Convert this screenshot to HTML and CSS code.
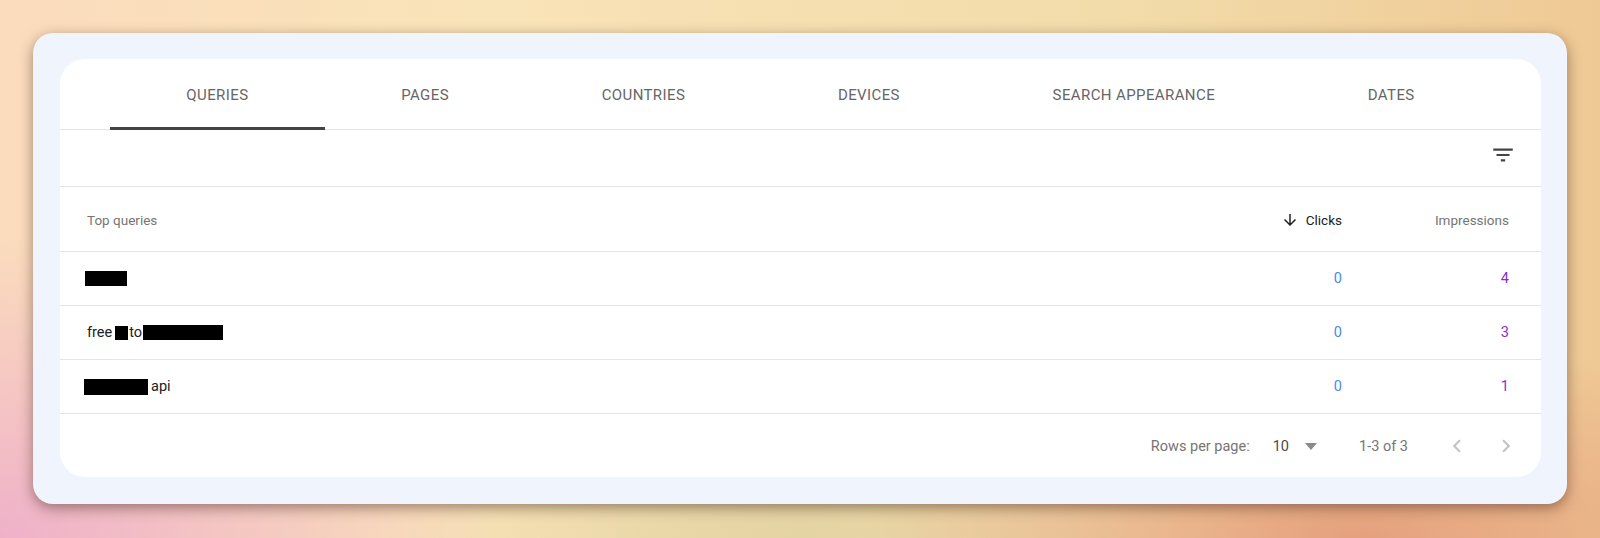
FILE: index.html
```html
<!DOCTYPE html>
<html lang="en">
<head>
    <meta charset="UTF-8">
    <title>Performance - Queries</title>
    <link rel="stylesheet" href="styles.css">
</head>
<body>
    <div class="frame">
        <div class="card">
            <div class="tabs">
                <div class="tab active">Queries</div>
                <div class="tab">Pages</div>
                <div class="tab">Countries</div>
                <div class="tab">Devices</div>
                <div class="tab">Search appearance</div>
                <div class="tab">Dates</div>
            </div>

            <div class="toolbar">
                <svg class="filter-icon" viewBox="0 0 24 24" width="26" height="26">
                    <path d="M10 18h4v-2h-4v2zM3 6v2h18V6H3zm3 7h12v-2H6v2z" fill="#444"/>
                </svg>
            </div>

            <div class="row head">
                <div class="col-query">Top queries</div>
                <div class="col-num sorted">
                    <svg viewBox="0 0 24 24" width="18" height="18">
                        <path d="M20 12l-1.41-1.41L13 16.17V4h-2v12.17l-5.58-5.59L4 12l8 8 8-8z" fill="#202124"/>
                    </svg>
                    Clicks
                </div>
                <div class="col-num">Impressions</div>
            </div>

            <div class="row">
                <div class="col-query"><span class="redact r1"></span></div>
                <div class="col-num clicks">0</div>
                <div class="col-num impr">4</div>
            </div>
            <div class="row">
                <div class="col-query">free<span class="redact r2"></span>to<span class="redact r3"></span></div>
                <div class="col-num clicks">0</div>
                <div class="col-num impr">3</div>
            </div>
            <div class="row">
                <div class="col-query"><span class="redact r4"></span>api</div>
                <div class="col-num clicks">0</div>
                <div class="col-num impr">1</div>
            </div>

            <div class="footer">
                <span class="label">Rows per page:</span>
                <span class="per-page">10</span>
                <span class="caret"></span>
                <span class="range">1-3 of 3</span>
                <svg class="chev" viewBox="0 0 24 24" width="26" height="26">
                    <path d="M15.41 7.41L14 6l-6 6 6 6 1.41-1.41L10.83 12z" fill="#c4c4c4"/>
                </svg>
                <svg class="chev" viewBox="0 0 24 24" width="26" height="26">
                    <path d="M10 6L8.59 7.41 13.17 12l-4.58 4.59L10 18l6-6z" fill="#c4c4c4"/>
                </svg>
            </div>
        </div>
    </div>
</body>
</html>
```

FILE: styles.css
```css
body {
    margin: 0;
    height: 538px;
    overflow: hidden;
    font-family: Roboto, "Liberation Sans", sans-serif;
    background:
        radial-gradient(ellipse 500px 300px at 0% 100%, #efb1c9 0%, rgba(239, 177, 201, 0) 100%),
        radial-gradient(ellipse 500px 200px at 85% 100%, #e5a07d 0%, rgba(229, 160, 125, 0) 100%),
        radial-gradient(ellipse 400px 250px at 50% 100%, #e4d3a3 0%, rgba(228, 211, 163, 0) 100%),
        linear-gradient(90deg, #fbdcbd 0%, #f9e3b8 30%, #f2dcaa 70%, #efc995 100%);
}

.frame {
    margin: 33px 0 0 33px;
    width: 1534px;
    height: 471px;
    box-sizing: border-box;
    padding: 26px 26px 27px 27px;
    background-color: #f0f5fd;
    border-radius: 20px;
    box-shadow: 0 4px 14px rgba(70, 40, 25, 0.5);
}

.card {
    background-color: #fff;
    border-radius: 25px;
    height: 418px;
    overflow: hidden;
}

.tabs {
    display: flex;
    height: 70px;
    padding: 0 50px;
    border-bottom: 1px solid #e4e4e4;
}

.tab {
    flex: 1 1 auto;
    display: flex;
    align-items: center;
    justify-content: center;
    text-transform: uppercase;
    font-size: 15px;
    letter-spacing: 0.4px;
    color: #666;
    box-sizing: border-box;
    border-bottom: 3px solid transparent;
    padding-top: 3px;
    margin-bottom: -1px;
}

.tab.active {
    border-bottom-color: #444;
}

.toolbar {
    height: 57px;
    box-sizing: border-box;
    display: flex;
    align-items: center;
    justify-content: flex-end;
    padding: 0 25px 6px 0;
    border-bottom: 1px solid #e4e4e4;
}

.row {
    display: flex;
    align-items: center;
    height: 53px;
    padding: 0 32px 0 27px;
    border-bottom: 1px solid #e4e4e4;
    font-size: 14.5px;
    color: #202124;
}

.row.head {
    box-sizing: border-box;
    height: 65px;
    padding-top: 2px;
    font-size: 13.5px;
    color: #757575;
}

.col-query {
    flex: 1;
    display: flex;
    align-items: center;
}

.col-num {
    width: 167px;
    display: flex;
    align-items: center;
    justify-content: flex-end;
}

.col-num.sorted {
    color: #202124;
}

.col-num.sorted svg {
    margin-right: 7px;
}

.clicks {
    color: #4a8ae6;
}

.impr {
    color: #8a2dc7;
}

.redact {
    display: inline-block;
    background-color: #000;
    height: 14px;
}

.r1 {
    width: 42px;
    height: 15px;
    margin-left: -2px;
}

.r2 {
    width: 13px;
    margin: 0 1px 0 3px;
}

.r3 {
    width: 80px;
    height: 15px;
    margin-left: 1px;
}

.r4 {
    width: 64px;
    height: 16px;
    margin: 1px 3px 0 -3px;
}

.footer {
    display: flex;
    align-items: center;
    justify-content: flex-end;
    height: 64px;
    padding-right: 22px;
    font-size: 14.5px;
    color: #757575;
}

.per-page {
    margin-left: 23px;
    color: #4a4a4a;
}

.caret {
    width: 0;
    height: 0;
    margin-left: 16px;
    border-left: 6.5px solid transparent;
    border-right: 6.5px solid transparent;
    border-top: 7px solid #8a8a8a;
}

.range {
    margin-left: 42px;
    margin-right: 36px;
}

.chev + .chev {
    margin-left: 23px;
}
```
